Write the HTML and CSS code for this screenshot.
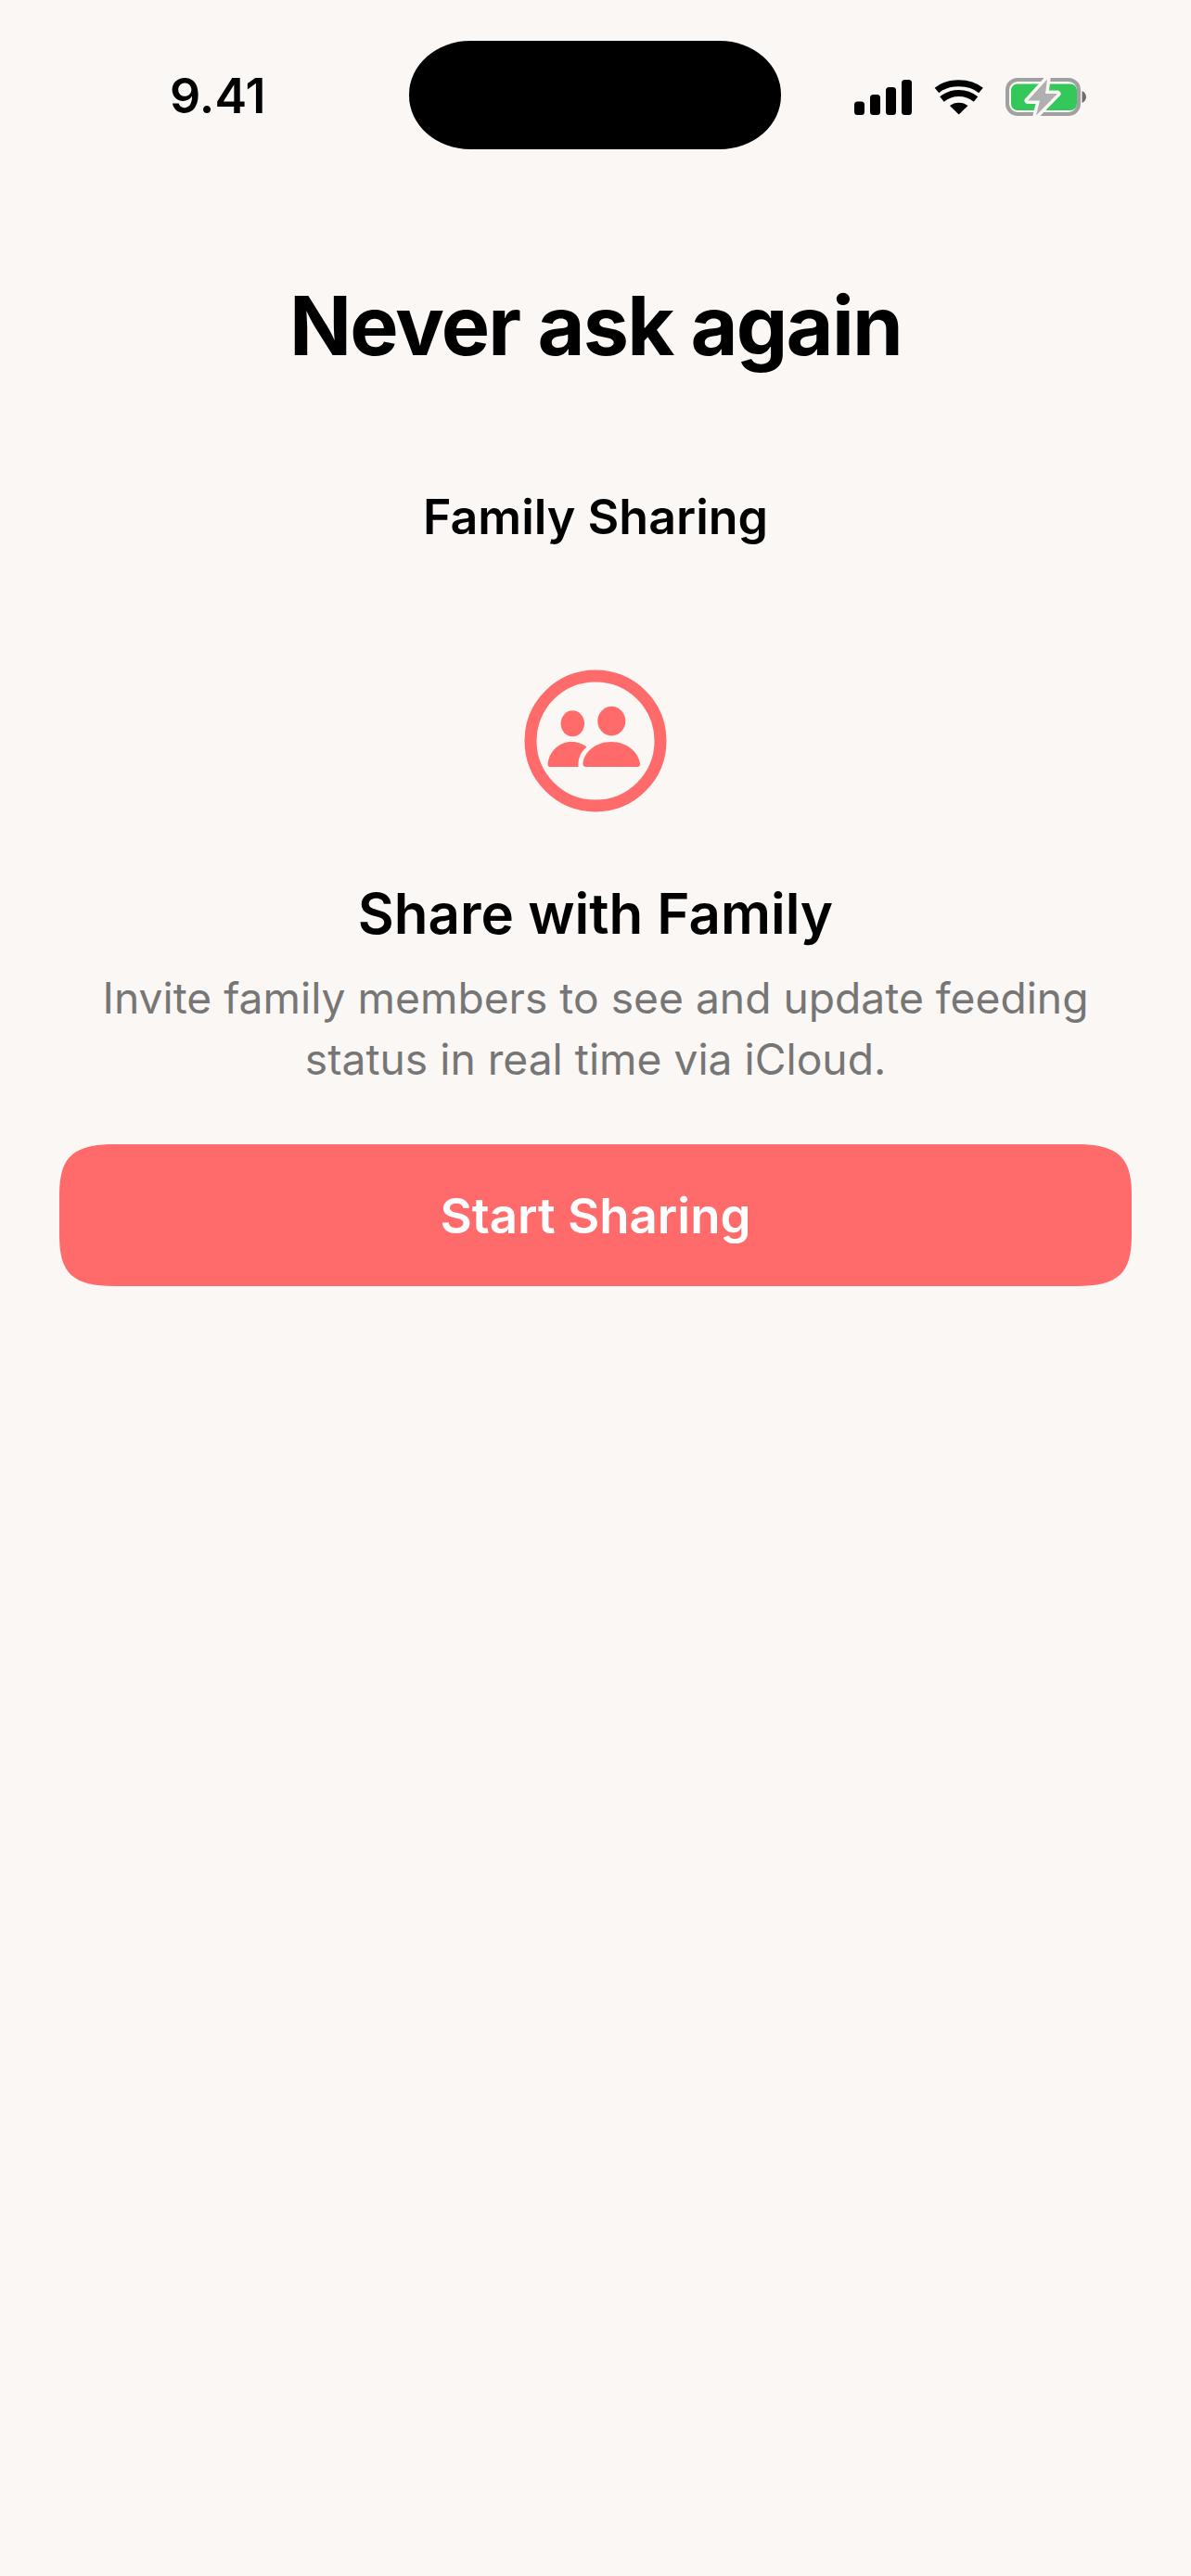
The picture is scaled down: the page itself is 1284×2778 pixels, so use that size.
FILE: index.html
```html
<!DOCTYPE html>
<html lang="en">
  <head>
    <meta charset="UTF-8" />
    <title>Never ask again</title>
    <link rel="stylesheet" href="styles.css">
  </head>
  <body>
    <div class="status-bar">
      <span class="time">9.41</span>
      <div class="island"></div>
      <div class="status-icons">
        <svg class="signal" width="62" height="38" viewBox="0 0 62 38">
          <rect x="0" y="23.5" width="11" height="14.5" rx="3.5" />
          <rect x="17" y="16" width="11" height="22" rx="3.5" />
          <rect x="34" y="8" width="11" height="30" rx="3.5" />
          <rect x="51" y="0" width="11" height="38" rx="3.5" />
        </svg>
        <svg class="wifi" width="54" height="38" viewBox="0 0 54 38">
          <path d="M26.7 37.5 L17 28 C22 23.5 31.5 23.5 36.5 28 Z" />
          <path d="M8.5 21 C19 12.3 34.5 12.3 45 21" fill="none" stroke="#000" stroke-width="7" />
          <path d="M3 11.5 C15 1 38.5 1 50.5 11.5" fill="none" stroke="#000" stroke-width="7" />
        </svg>
        <svg class="battery" width="87" height="42" viewBox="0 0 87 42">
          <rect x="2" y="2" width="77" height="37" rx="11" fill="none" stroke="#a0a0a0" stroke-width="4" />
          <rect x="6" y="6.5" width="71" height="28.5" rx="7" fill="#34c759" />
          <path d="M82.5 14 C85.5 15.5 87 18 87 20.5 C87 23 85.5 25.5 82.5 27 Z" fill="#6e6e6e" />
          <path d="M45 1.5 L24 24.5 H37 L33 40.5 L56 17 H43 Z" fill="#b0b0b0" stroke="#faf7f4" stroke-width="7" stroke-linejoin="round" paint-order="stroke" />
        </svg>
      </div>
    </div>

    <main class="content">
      <h1 class="title">Never ask again</h1>
      <h2 class="subtitle">Family Sharing</h2>

      <svg class="family-icon" width="156" height="156" viewBox="0 0 156 156">
        <circle cx="78" cy="78" r="70" fill="none" stroke="#ff6b6b" stroke-width="13" />
        <ellipse cx="53.3" cy="59.3" rx="12.7" ry="14" />
        <ellipse cx="95.3" cy="56.6" rx="15" ry="15.8" />
        <path d="M29 106 H59.5 C59 97 62 90 68.5 84.5 C63 80.5 58 79 52 79 C39 79 28 89 26.6 103 C26.4 105 27.5 106 29 106 Z" />
        <path d="M68 106 H122.5 C125 106 126.8 104.5 126 102 C124 90 112 79 95 79 C78 79 66 90 64.5 102 C64 104.5 65.5 106 68 106 Z" />
      </svg>

      <h3 class="feature-title">Share with Family</h3>
      <p class="feature-text">Invite family members to see and update feeding status in real time via iCloud.</p>

      <button class="start-button">Start Sharing</button>
    </main>
  </body>
</html>
```

FILE: styles.css
```css
body {
  font-family: Inter, "Liberation Sans", sans-serif;
  margin: 0;
  height: 2778px;
  background-color: #faf7f4;
  color: #000;
  overflow: hidden;
}
.status-bar {
  display: grid;
  grid-template-columns: 441px 401px 1fr;
  padding-top: 44px;
}
.time {
  align-self: center;
  justify-self: start;
  margin-left: 183px;
  padding-top: 2px;
  font-size: 52px;
  font-weight: 600;
  line-height: 1;
}
.island {
  height: 117px;
  background-color: #000;
  border-radius: 66px / 58px;
}
.status-icons {
  display: flex;
  align-items: flex-end;
  height: 80px;
  margin-left: 79px;
}
.status-icons svg {
  display: block;
}
.wifi {
  margin-left: 24px;
}
.battery {
  margin-left: 23px;
  margin-bottom: -2px;
}
.content {
  display: flex;
  flex-direction: column;
  align-items: center;
  padding: 0 64px;
}
.title {
  margin: 136px 0 0;
  font-size: 88px;
  font-weight: 700;
  line-height: 108px;
  letter-spacing: -1.8px;
}
.subtitle {
  margin: 121px 0 0;
  font-size: 52px;
  font-weight: 600;
  line-height: 64px;
}
.family-icon {
  display: block;
  margin-top: 131px;
  fill: #ff6b6b;
}
.feature-title {
  margin: 72px 0 0;
  font-size: 60px;
  font-weight: 600;
  line-height: 72px;
}
.feature-text {
  margin: 22px 0 0;
  width: 1100px;
  font-size: 46.2px;
  font-weight: 400;
  line-height: 66px;
  text-align: center;
  color: #767676;
}
.start-button {
  width: 1156px;
  height: 153px;
  margin-top: 59px;
  border: none;
  background-color: #ff6b6b;
  color: #fff;
  font-family: inherit;
  font-size: 52.8px;
  font-weight: 600;
  /* squircle corners, border-radius alone is too round */
  clip-path: path("M60 0 H1096 C1142 0 1156 14 1156 55 V98 C1156 139 1142 153 1096 153 H60 C14 153 0 139 0 98 V55 C0 14 14 0 60 0 Z");
}
```
